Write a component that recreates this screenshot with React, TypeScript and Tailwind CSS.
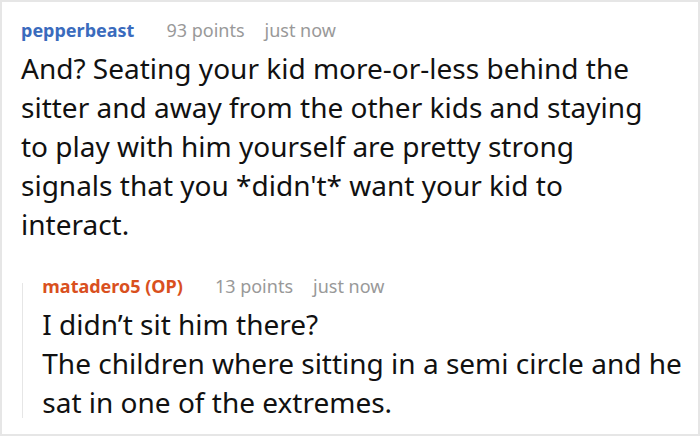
export default function App() {
  return (
    <div
      className="w-[700px] h-[436px] bg-white border-2 border-[#e6e6e6] overflow-hidden"
      style={{fontFamily: '"Noto Sans", "Open Sans", sans-serif'}}
    >
      {/* 메인 댓글 ===========================================================*/}
      <div className="flex flex-col pl-[19px] pt-[16px]">
        <div className="flex flex-row items-center h-[24px] text-[18px]">
          <span className="font-bold text-[#3a6bbd]">pepperbeast</span>
          <span className="ml-[32px] text-[#999999]">93 points</span>
          <span className="ml-[20px] text-[#999999]">just now</span>
        </div>
        <p className="mt-[7px] text-[28px] leading-[39px] text-[#111111] pr-[40px]">
          And? Seating your kid more-or-less behind the sitter and away from the other kids and staying
          to play with him yourself are pretty strong signals that you *didn't* want your kid to
          interact.
        </p>
      </div>
      {/* 답글 ===============================================================*/}
      <div className="flex flex-row mt-[30px] ml-[20px]">
        <div className="w-[2px] bg-[#e6e6e6] mt-[9px] mb-[4px]" />
        <div className="flex flex-col pl-[19px]">
          <div className="flex flex-row items-center h-[24px] text-[18px]">
            <span className="font-bold text-[#d9501e]">matadero5 (OP)</span>
            <span className="ml-[32px] text-[#999999]">13 points</span>
            <span className="ml-[20px] text-[#999999]">just now</span>
          </div>
          <p className="mt-[7px] text-[28px] leading-[39px] text-[#111111] pr-[10px]">
            I didn’t sit him there?
            <br />
            The children where sitting in a semi circle and he sat in one of the extremes.
          </p>
        </div>
      </div>
    </div>
  )
}
